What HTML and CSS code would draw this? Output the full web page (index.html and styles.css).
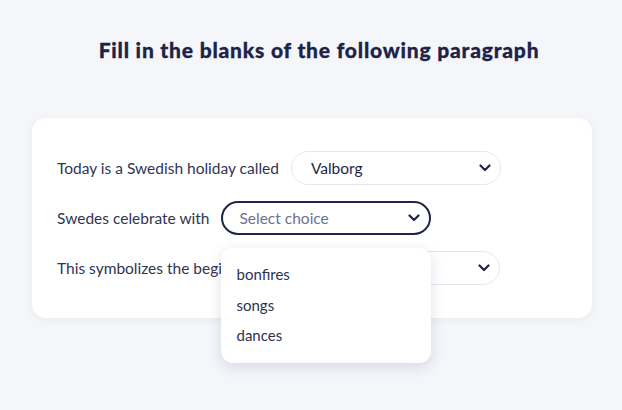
FILE: index.html
```html
<!DOCTYPE html>
<html>
<head>
<meta charset="utf-8">
<link rel="stylesheet" href="styles.css">
</head>
<body>
<h1 class="title">Fill in the blanks of the following paragraph</h1>
<div class="card">
  <div class="row">
    <span class="label">Today is a Swedish holiday called</span>
    <div class="select">
      <span class="value">Valborg</span>
      <svg class="chev" width="12" height="8" viewBox="0 0 12 8"><path d="M1.5 1.5 L6 6 L10.5 1.5" fill="none" stroke="#1f2547" stroke-width="2.2" stroke-linecap="round" stroke-linejoin="round"/></svg>
    </div>
  </div>
  <div class="row">
    <span class="label">Swedes celebrate with</span>
    <div class="select active">
      <span class="placeholder">Select choice</span>
      <svg class="chev" width="12" height="8" viewBox="0 0 12 8"><path d="M1.5 1.5 L6 6 L10.5 1.5" fill="none" stroke="#1f2547" stroke-width="2.2" stroke-linecap="round" stroke-linejoin="round"/></svg>
      <ul class="menu">
        <li>bonfires</li>
        <li>songs</li>
        <li>dances</li>
      </ul>
    </div>
  </div>
  <div class="row">
    <span class="label">This symbolizes the beginning of</span>
    <div class="select">
      <span class="placeholder">Select choice</span>
      <svg class="chev" width="12" height="8" viewBox="0 0 12 8"><path d="M1.5 1.5 L6 6 L10.5 1.5" fill="none" stroke="#1f2547" stroke-width="2.2" stroke-linecap="round" stroke-linejoin="round"/></svg>
    </div>
  </div>
</div>
</body>
</html>
```
FILE: styles.css
```css
* { box-sizing: border-box; }
html, body {
  margin: 0;
  background: #f5f6fa;
  font-family: "Lato", "Noto Sans", sans-serif;
  color: #2c3252;
}
body {
  min-height: 410px;
  padding-top: 1px;
}
.title {
  margin: 0;
  padding: 36px 0 0 16px;
  text-align: center;
  font-size: 21px;
  font-weight: 900;
  color: #1d2347;
  letter-spacing: 0.8px;
  line-height: 26px;
  -webkit-text-stroke: 0.3px #1d2347;
}
.card {
  margin: 55px 30px 0 32px;
  background: #fff;
  border-radius: 14px;
  padding: 33px 25px;
  display: flex;
  flex-direction: column;
  gap: 16px;
  box-shadow: 0 2px 8px rgba(30, 35, 80, 0.05);
}
.row {
  display: flex;
  align-items: center;
  gap: 12px;
  height: 34px;
}
.label {
  font-size: 15.5px;
  color: #2f3554;
  white-space: nowrap;
}
.select {
  position: relative;
  width: 210px;
  height: 34px;
  border: 1.5px solid #e6e7ee;
  border-radius: 17px;
  display: flex;
  align-items: center;
  justify-content: space-between;
  padding: 0 9px 0 19px;
  font-size: 15.5px;
}
.select.active {
  border: 2px solid #1f2547;
  padding-left: 16px;
}
.value { color: #1f2547; }
.placeholder { color: #6d7290; }
.chev { display: block; }
.menu {
  position: absolute;
  top: calc(100% + 15px);
  left: -2px;
  width: 210px;
  margin: 0;
  padding: 11px 0 12px;
  list-style: none;
  background: #fff;
  border-radius: 12px;
  box-shadow: 0 4px 14px rgba(30, 35, 80, 0.14);
  z-index: 5;
}
.menu li {
  padding: 0 15px;
  height: 30.5px;
  line-height: 30.5px;
  font-size: 15px;
  color: #2c3252;
}
```
